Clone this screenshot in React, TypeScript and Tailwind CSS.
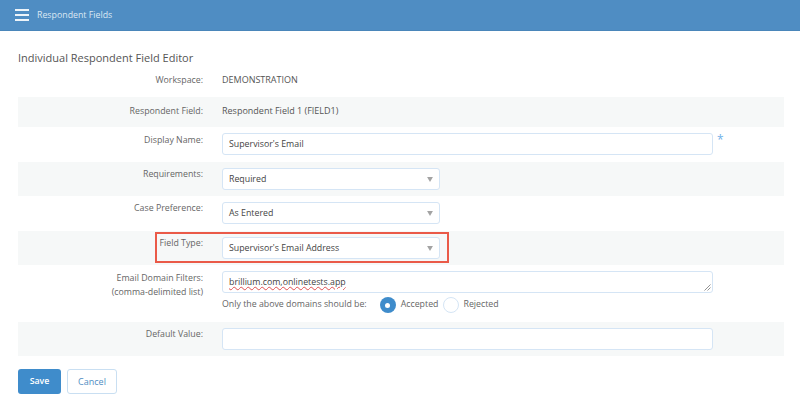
import { ReactNode } from 'react';

const Row = ({ label, shaded, h, labelTop = 'pt-[5px]', children }: { label: ReactNode; shaded?: boolean; h: string; labelTop?: string; children: ReactNode }) => (
  <div className={`relative flex ${h} ${shaded ? 'bg-[#f6f8f8]' : ''}`}>
    <div className={`w-[185px] shrink-0 ${labelTop} text-right text-[8.8px] leading-[14px] text-[#666]`}>{label}</div>
    <div className="ml-[19px] min-w-0 flex-1 pt-[6px]">{children}</div>
  </div>
);

const Select = ({ value }: { value: string }) => (
  <div className="flex h-[22px] w-[218px] items-center justify-between rounded-[3px] border border-[#d5e5f5] bg-white px-[6px] text-[8.8px] text-[#444]">
    <span className="pt-px">{value}</span>
    <svg width="6" height="5" viewBox="0 0 7 6">
      <path d="M0 0h7L3.5 6z" fill="#a3a3a3" />
    </svg>
  </div>
);

const Input = ({ value }: { value?: string }) => (
  <div className="flex h-[22px] w-[491px] items-center rounded-[3px] border border-[#d5e5f5] bg-white pl-[6px] text-[8.8px] text-[#444]">
    <span className="pt-px">{value}</span>
  </div>
);

export default function App() {
  return (
    <div className="h-[412px] w-[800px] overflow-hidden bg-white font-['Open_Sans',sans-serif]">
      <header className="flex h-[31px] items-center border-b border-[#4a86ba] bg-[#4f8dc3] pl-[15px]">
        <div className="flex w-[14px] flex-col gap-[3px]">
          <span className="h-[2px] bg-white/90" />
          <span className="h-[2px] bg-white/90" />
          <span className="h-[2px] bg-white/90" />
        </div>
        <span className="ml-[8px] pt-px text-[8.8px] text-[#dbe8f3]">Respondent Fields</span>
      </header>

      <main className="px-[18px]">
        <h1 className="pt-[19px] text-[11px] leading-[16px] font-medium text-[#555]">Individual Respondent Field Editor</h1>
        <div className="w-[766px]">
          <div className="flex h-[31px]">
            <div className="w-[185px] pt-[7px] text-right text-[8.8px] leading-[14px] text-[#666]">Workspace:</div>
            <div className="ml-[19px] pt-[7px] text-[9px] leading-[14px] font-medium text-[#555]">DEMONSTRATION</div>
          </div>
          <div className="flex h-[30px] bg-[#f6f8f8]">
            <div className="w-[185px] pt-[7px] text-right text-[8.8px] leading-[14px] text-[#666]">Respondent Field:</div>
            <div className="ml-[19px] pt-[7px] text-[9px] leading-[14px] font-medium text-[#555]">Respondent Field 1 (FIELD1)</div>
          </div>
          <Row label="Display Name:" h="h-[35px]" labelTop="pt-[6px]">
            <div className="flex items-start">
              <Input value="Supervisor's Email" />
              <span className="ml-[4px] text-[12px] leading-[14px] text-[#6fb0e8]">*</span>
            </div>
          </Row>
          <Row label="Requirements:" shaded h="h-[34px]">
            <Select value="Required" />
          </Row>
          <Row label="Case Preference:" h="h-[35px]">
            <Select value="As Entered" />
          </Row>
          <Row label="Field Type:" shaded h="h-[34px]">
            <Select value="Supervisor's Email Address" />
            <div className="pointer-events-none absolute top-[1px] left-[137px] h-[31px] w-[294px] border-2 border-[#ea5a48]" />
          </Row>
          <Row
            label={
              <>
                Email Domain Filters:
                <br />
                (comma-delimited list)
              </>
            }
            h="h-[57px]"
            labelTop="pt-[6px]"
          >
            <div className="relative flex h-[22px] w-[491px] items-center rounded-[3px] border border-[#d5e5f5] bg-white pl-[6px] text-[8.8px] text-[#444]">
              <span className="pt-px underline decoration-[#e05050] decoration-wavy decoration-1">brillium.com,onlinetests.app</span>
              <svg width="7" height="7" viewBox="0 0 7 7" className="absolute right-[1px] bottom-[1px]">
                <path d="M0.5 6.5L6.5 0.5M3.5 6.5L6.5 3.5" stroke="#777" strokeWidth="0.8" />
              </svg>
            </div>
            <div className="mt-[4px] flex h-[16px] items-center text-[8.8px] text-[#666]">
              <span>Only the above domains should be:</span>
              <span className="ml-[13px] flex h-[16px] w-[16px] items-center justify-center rounded-full bg-[#3f8ccb]">
                <span className="h-[5px] w-[5px] rounded-full bg-white" />
              </span>
              <span className="ml-[5px]">Accepted</span>
              <span className="ml-[5px] h-[16px] w-[16px] rounded-full border border-[#d5e5f5] bg-white" />
              <span className="ml-[4px]">Rejected</span>
            </div>
          </Row>
          <Row label="Default Value:" shaded h="h-[34px]">
            <Input />
          </Row>
        </div>
        <div className="mt-[13px] flex gap-[6px]">
          <button className="h-[25px] w-[43px] rounded-[3px] bg-[#3f8ccb] text-[8.8px] font-semibold text-white">Save</button>
          <button className="h-[25px] w-[50px] rounded-[3px] border border-[#c9dff2] bg-white text-[9px] font-medium text-[#4f8dc3]">Cancel</button>
        </div>
      </main>
    </div>
  );
}
